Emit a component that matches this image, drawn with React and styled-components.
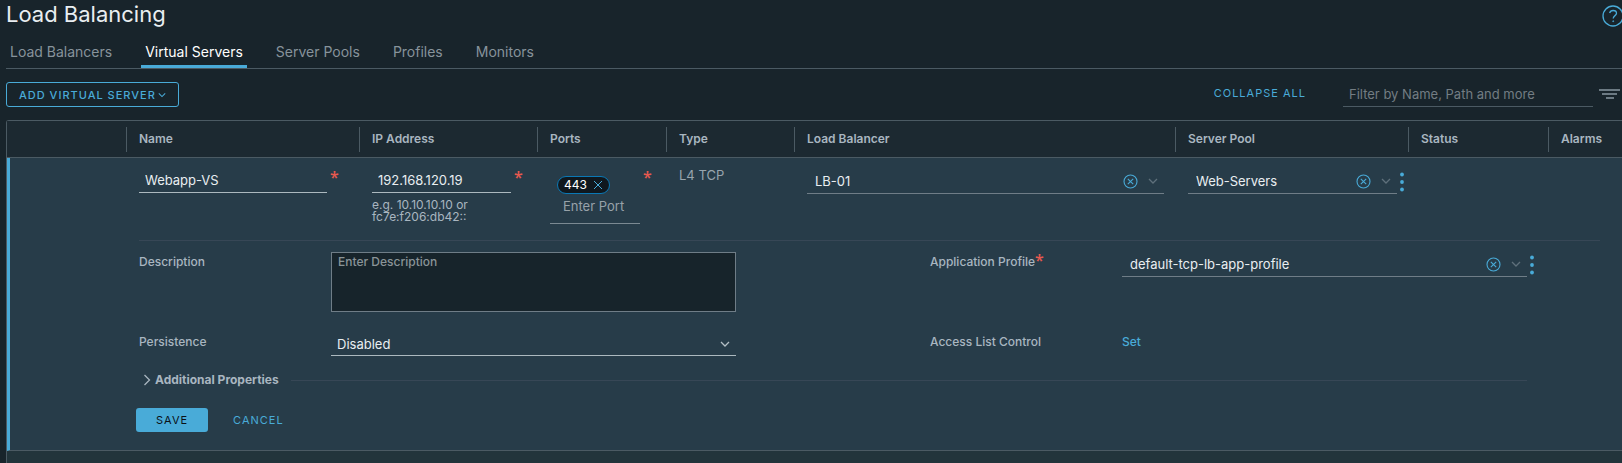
import React from "react";
import styled, { createGlobalStyle, ThemeProvider } from "styled-components";

const theme = {
  page: "#18242b",
  header: "#1c2931",
  row: "#273c49",
  rowAlt: "#22343b",
  field: "#17242b",
  line: "#4b5a63",
  faint: "#374756",
  accent: "#49abd8",
  text: "#e9eef1",
  soft: "#a9b6c0",
  muted: "#87939b",
  danger: "#e8594f",
};

const GlobalStyle = createGlobalStyle`
  *, *::before, *::after { box-sizing: border-box; }
  body {
    margin: 0;
    background: ${theme.page};
    color: ${theme.soft};
    font-family: Inter, "Open Sans", "Liberation Sans", sans-serif;
    font-size: 13px;
    line-height: 20px;
    overflow-x: hidden;
  }
  button, input, select, textarea { font: inherit; color: inherit; margin: 0; }
  svg { display: block; flex: none; }
`;

const Page = styled.main`
  padding-left: 6px;
`;

const PageHeader = styled.header`
  display: flex;
  justify-content: space-between;
  height: 36px;
`;

const Title = styled.h1`
  margin: 0;
  font-size: 22px;
  font-weight: 400;
  line-height: 28px;
  color: ${(p) => p.theme.text};
`;

const IconButton = styled.button`
  display: flex;
  align-items: center;
  justify-content: center;
  flex: none;
  padding: 0;
  border: 0;
  background: none;
  color: ${(p) => p.$color || p.theme.accent};
  cursor: pointer;
`;

const HelpButton = styled(IconButton)`
  height: 32px;
`;

const Tabs = styled.nav`
  display: flex;
  gap: 25px;
  border-bottom: 1px solid ${(p) => p.theme.line};
`;

const Tab = styled.a`
  padding: 6px 4px 3px;
  border-bottom: 3px solid ${(p) => (p.$active ? p.theme.accent : "transparent")};
  color: ${(p) => (p.$active ? "#ffffff" : p.theme.muted)};
  font-size: 14px;
  text-decoration: none;
`;

const Toolbar = styled.div`
  display: flex;
  justify-content: space-between;
  align-items: flex-start;
  padding: 13px 0;
`;

const ToolbarEnd = styled.div`
  display: flex;
  align-items: flex-start;
`;

const TextButton = styled.button`
  padding: 0;
  border: 0;
  background: none;
  color: ${(p) => p.theme.accent};
  font-size: 11px;
  line-height: 24px;
  letter-spacing: 1px;
  cursor: pointer;
`;

const CollapseButton = styled(TextButton)`
  line-height: 22px;
`;

const OutlineButton = styled(TextButton)`
  display: flex;
  align-items: center;
  gap: 2px;
  height: 25px;
  padding: 0 12px;
  border: 1px solid ${(p) => p.theme.accent};
  border-radius: 3px;
  font-weight: 500;
  line-height: 22px;
`;

const SolidButton = styled(TextButton)`
  padding: 0 20px;
  border-radius: 3px;
  background: ${(p) => p.theme.accent};
  color: #0b1116;
`;

const FilterInput = styled.input`
  width: 250px;
  height: 25px;
  margin: 0 6px 0 37px;
  padding: 0 6px 1px;
  border: 0;
  border-bottom: 1px solid ${(p) => p.theme.line};
  background: none;
  outline: none;
  &::placeholder { color: #737d83; opacity: 1; }
`;

const FilterOptions = styled(IconButton)`
  height: 24px;
`;

const Grid = styled.table`
  width: 100%;
  table-layout: fixed;
  border-collapse: separate;
  border-spacing: 0;
  border: 1px solid ${(p) => p.theme.line};
  border-right: 0;
  border-bottom: 0;
  border-top-left-radius: 3px;
`;

const Col = styled.col`
  width: ${(p) => (p.$width ? `${p.$width}px` : "auto")};
`;

const HeadCell = styled.th`
  padding: 6px 0 5px;
  border-bottom: 1px solid ${(p) => p.theme.line};
  background: ${(p) => p.theme.header};
  text-align: left;
`;

const HeadLabel = styled.div`
  height: 25px;
  padding-left: 12px;
  border-right: ${(p) => (p.$last ? "0" : `1px solid ${p.theme.line}`)};
  font-size: 12px;
  font-weight: 600;
  line-height: 24px;
`;

const Cell = styled.td`
  padding: 11px ${(p) => p.$end ?? 12}px 16px 12px;
  background: ${(p) => p.theme.row};
  vertical-align: top;
`;

const MarkerCell = styled(Cell)`
  border-left: 3px solid ${(p) => p.theme.accent};
`;

const DetailCell = styled.td`
  padding: 0 22px 18px 129px;
  border-left: 3px solid ${(p) => p.theme.accent};
  border-bottom: 1px solid ${(p) => p.theme.line};
  background: ${(p) => p.theme.row};
`;

const NextRowCell = styled.td`
  height: 12px;
  padding: 0;
  background: ${(p) => p.theme.rowAlt};
`;

const RequiredField = styled.div`
  display: flex;
  align-items: flex-start;
  gap: 3px;
`;

const Star = styled.span`
  flex: none;
  width: 8px;
  color: ${(p) => p.theme.danger};
  font-family: "Open Sans", sans-serif;
  font-size: 16px;
  font-weight: 600;
  line-height: 16px;
`;

const TextInput = styled.input`
  flex: 1;
  min-width: 0;
  width: 100%;
  height: 24px;
  padding: 0 6px 1px;
  border: 0;
  border-bottom: 1px solid #acb9bf;
  background: none;
  color: ${(p) => p.theme.text};
  outline: none;
`;

const Hint = styled.div`
  margin-top: 6px;
  font-size: 12px;
  line-height: 12px;
`;

const PortBox = styled.div`
  flex: 1;
  min-width: 0;
  padding: 7px 0 4px;
  border-bottom: 1px solid #7b8992;
`;

const Chip = styled.span`
  display: flex;
  align-items: center;
  justify-content: space-between;
  width: 53px;
  height: 18px;
  margin-left: 7px;
  padding: 0 6px;
  border: 1px solid #0a78b5;
  border-radius: 9px;
  background: #10181e;
  color: #ffffff;
  font-size: 12px;
  line-height: 16px;
`;

const PortInput = styled.input`
  display: block;
  width: 100%;
  height: 25px;
  padding: 0 0 1px 13px;
  border: 0;
  background: none;
  outline: none;
  &::placeholder { color: #98a2a9; opacity: 1; }
`;

const TypeText = styled.div`
  line-height: 13px;
  color: #98a5ae;
`;

const SelectRow = styled.div`
  display: flex;
  flex: 1;
  min-width: 0;
`;

const SelectBox = styled.div`
  display: flex;
  flex: 1;
  align-items: center;
  gap: 10px;
  min-width: 0;
  height: ${(p) => (p.$bright ? 24 : 25)}px;
  padding-right: 6px;
  border-bottom: 1px solid ${(p) => (p.$bright ? "#acb9bf" : "#6f7d87")};
`;

const Select = styled.select`
  flex: 1;
  min-width: 0;
  height: 20px;
  padding: 0 8px;
  padding-left: ${(p) => p.$inset ?? 8}px;
  border: 0;
  appearance: none;
  background: none;
  color: ${(p) => p.theme.text};
  line-height: 20px;
  outline: none;
`;

const FormGrid = styled.div`
  display: grid;
  grid-template-columns: 1fr 1fr;
  gap: 20px 194px;
  padding: 11px 73px 0 0;
  border-top: 1px solid ${(p) => p.theme.faint};
`;

const FormItem = styled.div`
  display: flex;
  align-items: flex-start;
  min-width: 0;
`;

const FormLabel = styled.label`
  display: flex;
  flex: none;
  width: 192px;
  font-size: 12px;
  font-weight: 500;
`;

const Overhang = styled.div`
  display: flex;
  flex: 1;
  min-width: 0;
  margin-right: -8px;
`;

const TextArea = styled.textarea`
  flex: 1;
  min-width: 0;
  height: 60px;
  padding: 0 6px;
  border: 1px solid #6f7d87;
  border-radius: 0;
  background: ${(p) => p.theme.field};
  font-size: 12px;
  font-weight: 500;
  line-height: 18px;
  outline: none;
  resize: none;
  &::placeholder { color: #8a9498; opacity: 1; }
`;

const Link = styled.a`
  color: ${(p) => p.theme.accent};
  font-size: 12px;
  font-weight: 500;
  text-decoration: none;
`;

const Section = styled.div`
  display: flex;
  align-items: center;
  gap: 12px;
  margin: 14px 73px 18px 0;
  &::after {
    content: "";
    flex: 1;
    height: 1px;
    background: ${(p) => p.theme.faint};
  }
`;

const SectionToggle = styled.button`
  display: flex;
  align-items: center;
  gap: 4px;
  padding: 0 0 0 4px;
  border: 0;
  background: none;
  font-size: 12px;
  font-weight: 700;
  line-height: 20px;
  cursor: pointer;
`;

const Actions = styled.div`
  display: flex;
  gap: 25px;
  margin-left: -3px;
`;

function Chevron({ size = 8, color = "currentColor", right }) {
  return (
    <svg width={right ? 8 : size} height={right ? 12 : size} viewBox={right ? "0 0 8 12" : "0 0 10 10"} fill="none" stroke={color} strokeWidth="1.3" aria-hidden="true">
      <path d={right ? "M1.5 1 6.5 6l-5 5" : "M1 3l4 4 4-4"} />
    </svg>
  );
}

function ClearIcon() {
  return (
    <svg width="15" height="15" viewBox="0 0 15 15" fill="none" stroke="currentColor" strokeWidth="1.1" aria-hidden="true">
      <circle cx="7.5" cy="7.5" r="6.5" />
      <path d="M4.8 4.8l5.4 5.4M10.2 4.8l-5.4 5.4" />
    </svg>
  );
}

function DotsIcon() {
  return (
    <svg width="8" height="20" viewBox="0 0 8 20" fill="currentColor" aria-hidden="true">
      <circle cx="5" cy="2.5" r="1.9" />
      <circle cx="5" cy="10" r="1.9" />
      <circle cx="5" cy="17.5" r="1.9" />
    </svg>
  );
}

function ClearableSelect({ label, id, value, menu }) {
  return (
    <SelectRow>
      <SelectBox>
        <Select id={id} aria-label={label} defaultValue={value}>
          <option>{value}</option>
        </Select>
        <IconButton type="button" aria-label={`Clear ${value}`}>
          <ClearIcon />
        </IconButton>
        <Chevron size={10} color="#5f707b" />
      </SelectBox>
      {menu && (
        <IconButton type="button" aria-label={`More actions for ${value}`}>
          <DotsIcon />
        </IconButton>
      )}
    </SelectRow>
  );
}

const tabs = ["Load Balancers", "Virtual Servers", "Server Pools", "Profiles", "Monitors"];

const columns = [
  { label: "", width: 120 },
  { label: "Name", width: 233 },
  { label: "IP Address", width: 178 },
  { label: "Ports", width: 129 },
  { label: "Type", width: 128 },
  { label: "Load Balancer" },
  { label: "Server Pool", width: 233 },
  { label: "Status", width: 140 },
  { label: "Alarms", width: 73 },
];

export default function App() {
  return (
    <ThemeProvider theme={theme}>
      <GlobalStyle />
      <Page>
        <PageHeader>
          <Title>Load Balancing</Title>
          <HelpButton type="button" aria-label="Help">
            <svg width="20" height="22" viewBox="0 0 20 22" fill="none" stroke="currentColor" strokeWidth="1.3" aria-hidden="true">
              <circle cx="11" cy="11" r="10" />
              <path d="M7.6 8c.5-1.6 1.8-2.5 3.5-2.5 2 0 3.4 1.1 3.4 2.8 0 2.4-3.3 2.3-3.3 5.2" />
              <circle cx="11.2" cy="16.2" r=".5" fill="currentColor" stroke="currentColor" strokeWidth=".8" />
            </svg>
          </HelpButton>
        </PageHeader>

        <Tabs>
          {tabs.map((name) => (
            <Tab key={name} href="#" $active={name === "Virtual Servers"}>
              {name}
            </Tab>
          ))}
        </Tabs>

        <Toolbar>
          <OutlineButton type="button">
            ADD VIRTUAL SERVER
            <Chevron />
          </OutlineButton>
          <ToolbarEnd>
            <CollapseButton type="button">COLLAPSE ALL</CollapseButton>
            <FilterInput type="text" aria-label="Filter" placeholder="Filter by Name, Path and more" />
            <FilterOptions type="button" aria-label="Filter options" $color="#6c7a83">
              <svg width="23" height="12" viewBox="0 0 23 12" stroke="currentColor" strokeWidth="2" aria-hidden="true">
                <path d="M0 2h21M3 6h15M7 10h8" />
              </svg>
            </FilterOptions>
          </ToolbarEnd>
        </Toolbar>

        <form onSubmit={(e) => e.preventDefault()}>
          <Grid>
            <colgroup>
              {columns.map((c) => (
                <Col key={c.label} $width={c.width} />
              ))}
            </colgroup>
            <thead>
              <tr>
                {columns.map((c, i) => (
                  <HeadCell key={c.label} scope="col">
                    <HeadLabel $last={i === columns.length - 1}>{c.label}</HeadLabel>
                  </HeadCell>
                ))}
              </tr>
            </thead>
            <tbody>
              <tr>
                <MarkerCell />
                <Cell $end={22}>
                  <RequiredField>
                    <TextInput type="text" aria-label="Name" defaultValue="Webapp-VS" />
                    <Star>*</Star>
                  </RequiredField>
                </Cell>
                <Cell $end={16}>
                  <RequiredField>
                    <TextInput type="text" aria-label="IP Address" defaultValue="192.168.120.19" />
                    <Star>*</Star>
                  </RequiredField>
                  <Hint>
                    e.g. 10.10.10.10 or
                    <br />
                    fc7e:f206:db42::
                  </Hint>
                </Cell>
                <Cell $end={16}>
                  <RequiredField>
                    <PortBox>
                      <Chip>
                        443
                        <IconButton type="button" aria-label="Remove port 443">
                          <svg width="10" height="10" viewBox="0 0 10 10" stroke="currentColor" strokeWidth="1" aria-hidden="true">
                            <path d="M1 1l8 8M9 1l-8 8" />
                          </svg>
                        </IconButton>
                      </Chip>
                      <PortInput type="text" aria-label="Ports" placeholder="Enter Port" />
                    </PortBox>
                    <Star>*</Star>
                  </RequiredField>
                </Cell>
                <Cell>
                  <TypeText>L4 TCP</TypeText>
                </Cell>
                <Cell>
                  <ClearableSelect label="Load Balancer" value="LB-01" />
                </Cell>
                <Cell $end={4}>
                  <ClearableSelect label="Server Pool" value="Web-Servers" menu />
                </Cell>
                <Cell />
                <Cell />
              </tr>
              <tr>
                <DetailCell colSpan={columns.length}>
                  <FormGrid>
                    <FormItem>
                      <FormLabel htmlFor="description">Description</FormLabel>
                      <TextArea id="description" placeholder="Enter Description" />
                    </FormItem>
                    <FormItem>
                      <FormLabel htmlFor="profile">
                        Application Profile<Star>*</Star>
                      </FormLabel>
                      <Overhang>
                        <ClearableSelect id="profile" value="default-tcp-lb-app-profile" menu />
                      </Overhang>
                    </FormItem>
                    <FormItem>
                      <FormLabel htmlFor="persistence">Persistence</FormLabel>
                      <SelectBox $bright>
                        <Select id="persistence" $inset={6} defaultValue="Disabled">
                          <option>Disabled</option>
                        </Select>
                        <Chevron size={10} color="#b4bfc5" />
                      </SelectBox>
                    </FormItem>
                    <FormItem>
                      <FormLabel as="span">Access List Control</FormLabel>
                      <Link href="#">Set</Link>
                    </FormItem>
                  </FormGrid>
                  <Section>
                    <SectionToggle type="button" aria-expanded="false">
                      <Chevron right />
                      Additional Properties
                    </SectionToggle>
                  </Section>
                  <Actions>
                    <SolidButton type="submit">SAVE</SolidButton>
                    <TextButton type="button">CANCEL</TextButton>
                  </Actions>
                </DetailCell>
              </tr>
              <tr>
                <NextRowCell colSpan={columns.length} />
              </tr>
            </tbody>
          </Grid>
        </form>
      </Page>
    </ThemeProvider>
  );
}
